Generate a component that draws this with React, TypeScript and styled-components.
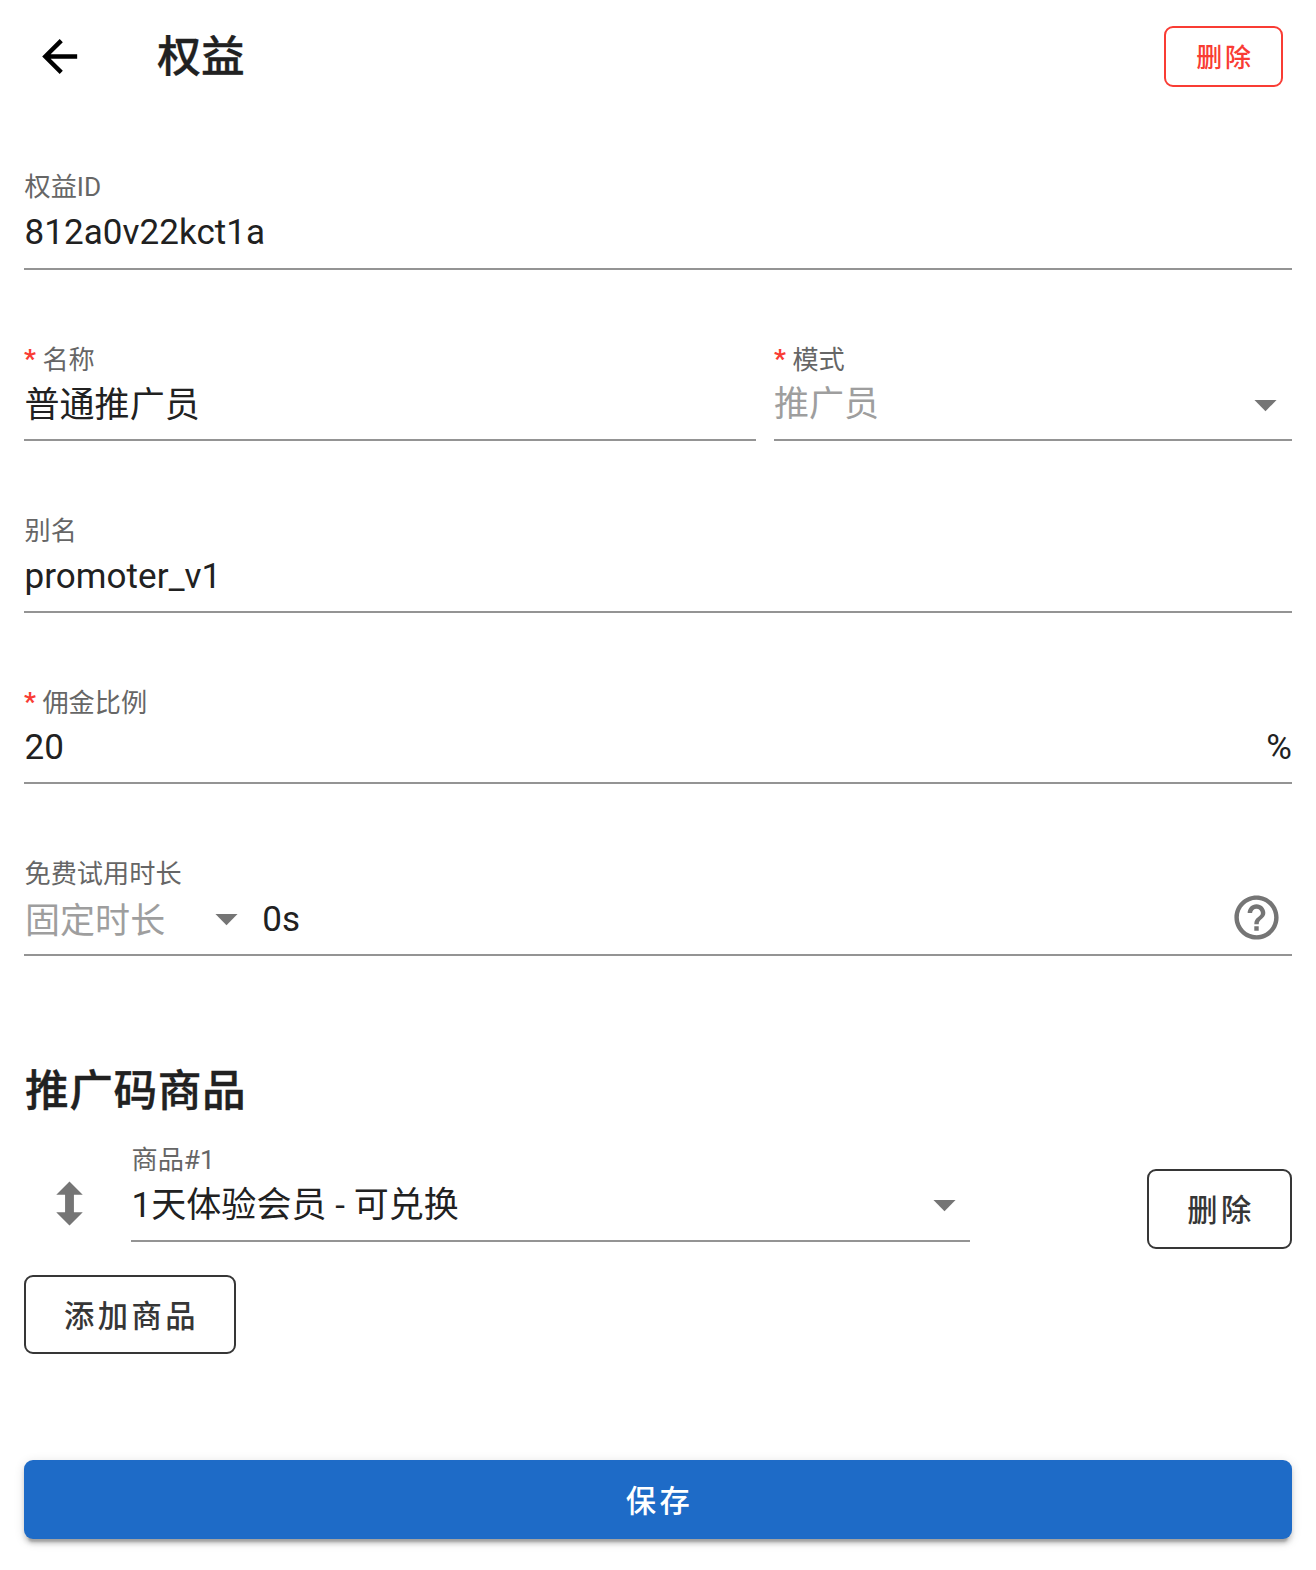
import React from "react";
import styled, { createGlobalStyle } from "styled-components";

const GlobalStyle = createGlobalStyle`
  *, *::before, *::after { box-sizing: border-box; }
  body {
    margin: 0;
    background: #fff;
    color: #212121;
    font-family: Roboto, "Noto Sans CJK SC", sans-serif;
    -webkit-font-smoothing: antialiased;
  }
  button, input { font-family: inherit; }
`;

const Page = styled.main`
  display: flex;
  flex-direction: column;
  width: 1316px;
  height: 1570px;
  padding: 0 24px;
`;

const Toolbar = styled.header`
  display: flex;
  align-items: center;
  height: 113px;
  padding: 0 9px;
`;

const IconButton = styled.button`
  display: flex;
  padding: 0;
  border: 0;
  background: none;
  color: #000;
`;

const Title = styled.h1`
  flex: 1;
  margin: 0 0 0 71.3px;
  font-size: 43.7px;
  font-weight: 500;
  line-height: 66px;
  letter-spacing: 0;
  -webkit-text-stroke: 0.35px currentColor;
`;

const Button = styled.button<{ $danger?: boolean; $width: number; $height?: number }>`
  display: flex;
  align-items: center;
  justify-content: center;
  width: ${(p) => p.$width}px;
  height: ${(p) => p.$height ?? 79}px;
  padding: 0 0 2px 3px;
  border: 2px solid ${(p) => (p.$danger ? "#f93c34" : "#363636")};
  border-radius: 9px;
  background: transparent;
  color: ${(p) => (p.$danger ? "#f93c34" : "#363636")};
  font-size: ${(p) => (p.$danger ? 26 : 30.3)}px;
  font-weight: 500;
  letter-spacing: ${(p) => (p.$danger ? 2.8 : 3.5)}px;
`;

const Form = styled.section`
  display: flex;
  flex-direction: column;
  gap: 73px;
  margin-top: 58px;
`;

const Row = styled.div`
  display: grid;
  grid-template-columns: 732px 518px;
  gap: 18px;
`;

const FieldBox = styled.div`
  display: flex;
  flex-direction: column;
  min-width: 0;
`;

const Label = styled.label<{ $low?: boolean }>`
  height: 32px;
  padding-left: 0.5px;
  font-size: 26.2px;
  line-height: ${(p) => (p.$low ? 34 : 32)}px;
  color: #666;
  white-space: pre;
`;

const Required = styled.span`
  margin-left: -0.5px;
  color: #f93c34;
  font-weight: 700;
  line-height: 0;
  vertical-align: 1px;
`;

const Control = styled.div<{ $compact?: boolean }>`
  display: flex;
  align-items: flex-end;
  height: ${(p) => (p.$compact ? 66 : 67)}px;
  padding-bottom: 8px;
  border-bottom: 2px solid #949494;
`;

const Value = styled.span<{ $muted?: boolean; $lift?: number; $indent?: number }>`
  flex: 1;
  margin-bottom: ${(p) => p.$lift ?? 0}px;
  padding-left: ${(p) => p.$indent ?? 0.5}px;
  font-size: 35px;
  line-height: 52px;
  letter-spacing: 0.06px;
  color: ${(p) => (p.$muted ? "#9e9e9e" : "#212121")};
  white-space: nowrap;
`;

const Suffix = styled.span`
  font-size: 35px;
  line-height: 52px;
`;

const UnitSelect = styled.div`
  display: flex;
  align-items: flex-end;
  width: 237px;
  padding-right: 8px;
`;

const HelpSlot = styled.span`
  display: flex;
  padding: 0 9px 2px 0;
`;

const SectionTitle = styled.h2`
  margin: 102px 0 0 1px;
  font-size: 43.7px;
  font-weight: 500;
  line-height: 66px;
  letter-spacing: 0.55px;
  -webkit-text-stroke: 0.35px currentColor;
`;

const Product = styled.div`
  display: grid;
  grid-template-columns: 107px 839px 322px;
  height: 99px;
  margin-top: 19px;
`;

const DragHandle = styled.span`
  display: flex;
  padding: 33.5px 0 0 18.5px;
`;

const RemoveSlot = styled.div`
  display: flex;
  justify-content: flex-end;
  padding-top: 26px;
`;

const AddSlot = styled.div`
  margin-top: 33px;
`;

const SaveButton = styled.button`
  height: 79px;
  margin-top: 106px;
  padding: 0 0 2px 3px;
  border: 0;
  border-radius: 9px;
  background: #1e6bc7;
  color: #fff;
  font-size: 30.3px;
  font-weight: 500;
  letter-spacing: 3.5px;
  box-shadow: 0 6.6px 2.2px -4.4px rgba(0, 0, 0, 0.2), 0 4.4px 4.4px 0 rgba(0, 0, 0, 0.14),
    0 2.2px 11px 0 rgba(0, 0, 0, 0.12);
`;

const Glyph = styled.svg`
  flex: none;
  width: 53px;
  height: 53px;
  fill: currentColor;
`;

const MutedGlyph = styled(Glyph)`
  color: #757575;
`;

const CaretGlyph = styled(MutedGlyph)<{ $lift?: number; $pull?: number }>`
  margin: 0 ${(p) => -(p.$pull ?? 0)}px ${(p) => p.$lift ?? 0}px 0;
`;

const Caret = ({ lift, pull }: { lift?: number; pull?: number }) => (
  <CaretGlyph viewBox="0 0 24 24" $lift={lift} $pull={pull}>
    <path d="M7 10l5 5 5-5z" />
  </CaretGlyph>
);

type FieldProps = { label: string; required?: boolean; low?: boolean; children: React.ReactNode };

const Field = ({ label, required, low, children }: FieldProps) => (
  <FieldBox>
    <Label $low={low}>
      {required && <Required>* </Required>}
      {label}
    </Label>
    <Control $compact={required}>{children}</Control>
  </FieldBox>
);

export default function App() {
  return (
    <>
      <GlobalStyle />
      <Page>
        <Toolbar>
          <IconButton aria-label="返回">
            <Glyph viewBox="0 0 24 24">
              <path d="M20 11v2H8l5.5 5.5-1.42 1.42L4.16 12l7.92-7.92L13.5 5.5 8 11h12z" />
            </Glyph>
          </IconButton>
          <Title>权益</Title>
          <Button $danger $width={119} $height={61}>删除</Button>
        </Toolbar>

        <Form>
          <Field label="权益ID">
            <Value $lift={1}>812a0v22kct1a</Value>
          </Field>
          <Row>
            <Field label="名称" required low>
              <Value $lift={-1}>普通推广员</Value>
            </Field>
            <Field label="模式" required low>
              <Value $muted $indent={0}>推广员</Value>
              <Caret />
            </Field>
          </Row>
          <Field label="别名" low>
            <Value>promoter_v1</Value>
          </Field>
          <Field label="佣金比例" required low>
            <Value>20</Value>
            <Suffix>%</Suffix>
          </Field>
          <Field label="免费试用时长" low>
            <UnitSelect>
              <Value $muted $lift={-2} $indent={1}>固定时长</Value>
              <Caret lift={1} />
            </UnitSelect>
            <Value $indent={1.2}>0s</Value>
            <HelpSlot>
              <MutedGlyph viewBox="0 0 24 24">
                <path d="M11 18h2v-2h-2v2zm1-16C6.48 2 2 6.48 2 12s4.48 10 10 10 10-4.48 10-10S17.52 2 12 2zm0 18c-4.41 0-8-3.59-8-8s3.59-8 8-8 8 3.59 8 8-3.59 8-8 8zm0-14c-2.21 0-4 1.79-4 4h2c0-1.1.9-2 2-2s2 .9 2 2c0 2-3 1.75-3 5h2c0-2.25 3-2.5 3-5 0-2.21-1.79-4-4-4z" />
              </MutedGlyph>
            </HelpSlot>
          </Field>
        </Form>

        <SectionTitle>推广码商品</SectionTitle>
        <Product>
          <DragHandle>
            <MutedGlyph viewBox="0 0 24 24">
              <path d="M12 2l6 6h-4v8h4l-6 6-6-6h4V8H6z" />
            </MutedGlyph>
          </DragHandle>
          <Field label="商品#1" low>
            <Value>1天体验会员 - 可兑换</Value>
            <Caret lift={1} pull={1} />
          </Field>
          <RemoveSlot>
            <Button $width={145} $height={80}>删除</Button>
          </RemoveSlot>
        </Product>
        <AddSlot>
          <Button $width={212}>添加商品</Button>
        </AddSlot>
        <SaveButton>保存</SaveButton>
      </Page>
    </>
  );
}
